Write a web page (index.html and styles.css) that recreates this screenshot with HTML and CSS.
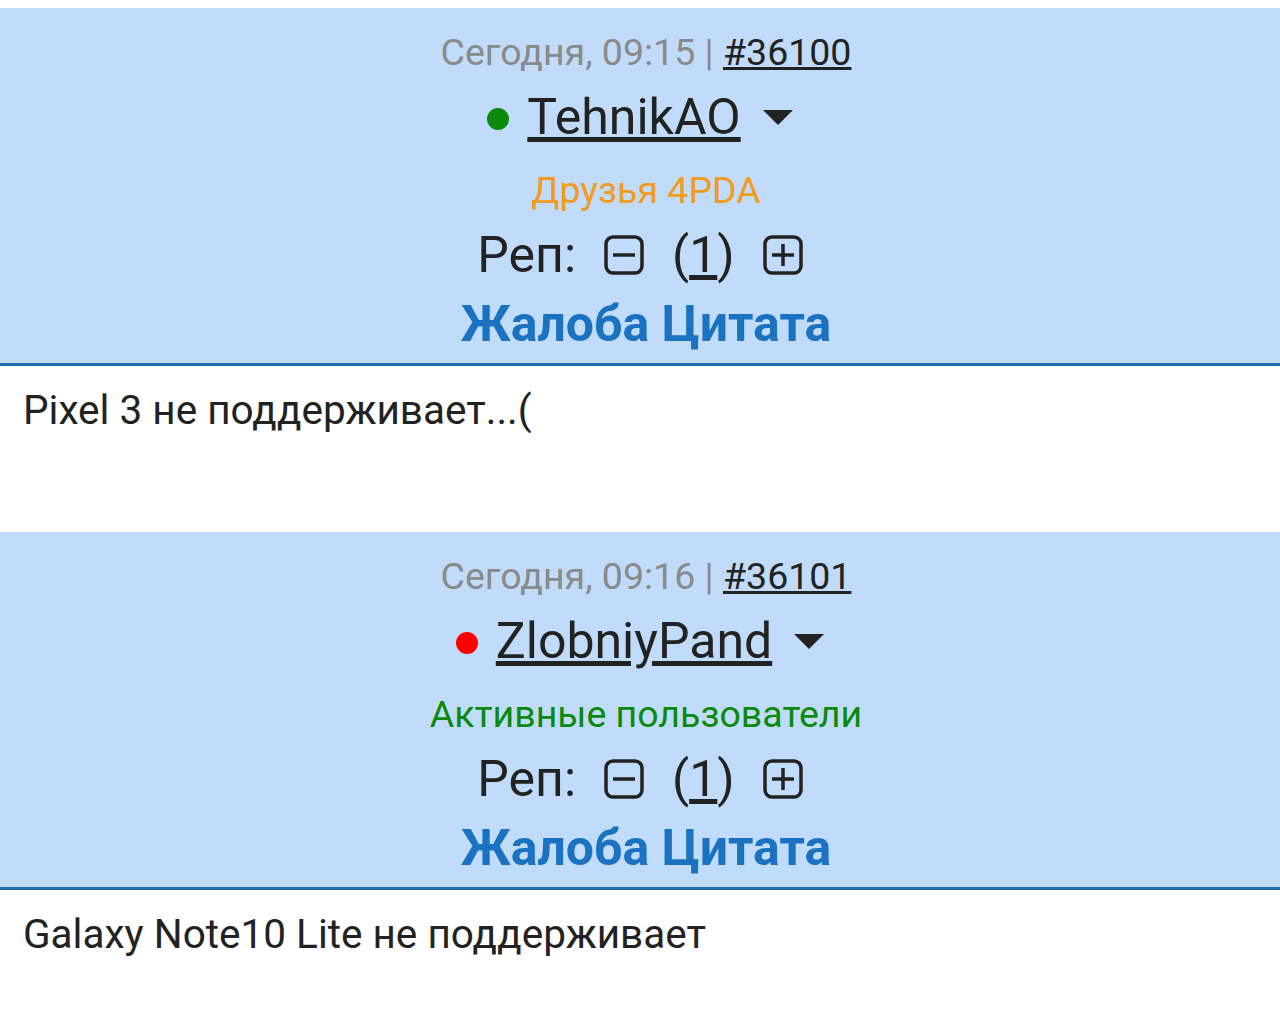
FILE: index.html
```html
<!DOCTYPE html>
<html lang="ru">
<head>
    <meta charset="UTF-8">
    <meta name="viewport" content="width=device-width, initial-scale=1.0">
    <title>Тема</title>
    <link rel="stylesheet" href="styles.css">
</head>
<body>
    <div class="topic">
        <div class="post">
            <div class="post-head">
                <div class="post-date">Сегодня, 09:15 | <a href="#" class="post-num">#36100</a></div>
                <div class="post-user">
                    <span class="status online"></span>
                    <a href="#" class="nick">TehnikAO</a>
                    <span class="caret"></span>
                </div>
                <div class="group friends">Друзья 4PDA</div>
                <div class="rep">
                    Реп:
                    <svg class="rep-btn" viewBox="0 0 40 40"><rect x="2" y="2" width="36" height="36" rx="7" fill="none" stroke="#222" stroke-width="3.5"/><line x1="9" y1="20" x2="31" y2="20" stroke="#222" stroke-width="3.5"/></svg>
                    <span class="rep-val">(<a href="#">1</a>)</span>
                    <svg class="rep-btn" viewBox="0 0 40 40"><rect x="2" y="2" width="36" height="36" rx="7" fill="none" stroke="#222" stroke-width="3.5"/><line x1="9" y1="20" x2="31" y2="20" stroke="#222" stroke-width="3.5"/><line x1="20" y1="9" x2="20" y2="31" stroke="#222" stroke-width="3.5"/></svg>
                </div>
                <div class="post-actions"><a href="#">Жалоба</a> <a href="#">Цитата</a></div>
            </div>
            <div class="post-body">Pixel 3 не поддерживает...(</div>
        </div>

        <div class="post">
            <div class="post-head">
                <div class="post-date">Сегодня, 09:16 | <a href="#" class="post-num">#36101</a></div>
                <div class="post-user">
                    <span class="status offline"></span>
                    <a href="#" class="nick">ZlobniyPand</a>
                    <span class="caret"></span>
                </div>
                <div class="group active">Активные пользователи</div>
                <div class="rep">
                    Реп:
                    <svg class="rep-btn" viewBox="0 0 40 40"><rect x="2" y="2" width="36" height="36" rx="7" fill="none" stroke="#222" stroke-width="3.5"/><line x1="9" y1="20" x2="31" y2="20" stroke="#222" stroke-width="3.5"/></svg>
                    <span class="rep-val">(<a href="#">1</a>)</span>
                    <svg class="rep-btn" viewBox="0 0 40 40"><rect x="2" y="2" width="36" height="36" rx="7" fill="none" stroke="#222" stroke-width="3.5"/><line x1="9" y1="20" x2="31" y2="20" stroke="#222" stroke-width="3.5"/><line x1="20" y1="9" x2="20" y2="31" stroke="#222" stroke-width="3.5"/></svg>
                </div>
                <div class="post-actions"><a href="#">Жалоба</a> <a href="#">Цитата</a></div>
            </div>
            <div class="post-body">Galaxy Note10 Lite не поддерживает</div>
        </div>
    </div>
</body>
</html>
```

FILE: styles.css
```css
body {
    margin: 0;
    padding: 0;
    font-family: Roboto, "Noto Sans", sans-serif;
    color: #222;
    background: #fff;
}

.topic {
    padding-top: 8px;
}

.post-head {
    background: #c1dcfa;
    text-align: center;
    padding: 20px 0 3px;
    border-bottom: 3px solid #1b6dab;
}

/* text lines sit a little right of the flex rows */
.post-date, .group, .post-actions {
    padding-left: 12px;
}

.post-date {
    font-size: 37.5px;
    line-height: 48px;
    color: #8a8a8a;
}

.post-num {
    color: #222;
}

.post-user {
    height: 82px;
    display: flex;
    align-items: center;
    justify-content: center;
}

.status {
    width: 22px;
    height: 22px;
    border-radius: 50%;
    margin-right: 18px;
    margin-top: 4px;
}

.status.online {
    background: #0a8a0a;
}

.status.offline {
    background: #f00;
}

.nick {
    font-size: 50px;
    color: #222;
}

.caret {
    width: 0;
    height: 0;
    border-left: 15px solid transparent;
    border-right: 15px solid transparent;
    border-top: 15px solid #222;
    margin-left: 22px;
}

.group {
    font-size: 37.5px;
    line-height: 64px;
}

.group.friends {
    color: #f39b1e;
}

.group.active {
    color: #0a8a0a;
}

.rep {
    height: 66px;
    font-size: 50px;
    display: flex;
    align-items: center;
    justify-content: center;
    gap: 28px;
}

.rep-btn {
    width: 40px;
    height: 40px;
}

.rep-val a {
    color: #222;
}

.post-actions {
    font-size: 50px;
    font-weight: bold;
    line-height: 72px;
}

.post-actions a {
    color: #1a72c0;
    text-decoration: none;
}

.post-body {
    height: 166px;
    padding: 20px 23px 0;
    box-sizing: border-box;
    font-size: 40.5px;
    line-height: 48px;
}
```
